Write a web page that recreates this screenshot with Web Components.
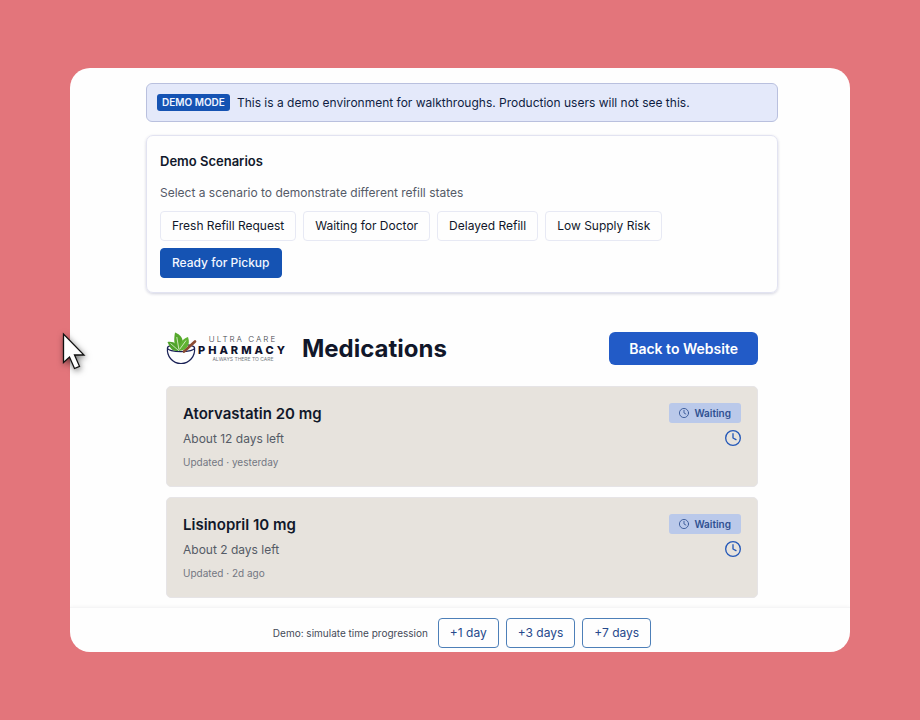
<!DOCTYPE html>
<html lang="en">
<head>
<meta charset="utf-8">
<meta name="viewport" content="width=device-width, initial-scale=1">
<title>Medications</title>
<style>
  body {
    margin: 0;
    background: #e3757b;
    font-family: Inter, "Liberation Sans", sans-serif;
    color: #11182b;
  }
</style>
</head>
<body>
<refill-app></refill-app>

<template id="t-app">
  <style>
    :host { display: flex; box-sizing: border-box; min-height: 100vh; padding: 68px 70px; position: relative; }
    .window { flex: 1; min-width: 0; display: flex; flex-direction: column; background: #fefefe; border-radius: 20px; overflow: hidden; }
    main { flex: 1; padding: 15px 72px 8px 76px; display: flex; flex-direction: column; gap: 13px; }
    .list { padding: 0 20px; margin-top: 26px; display: flex; flex-direction: column; gap: 10px; }
    page-heading { margin-bottom: 11px; }
    mouse-pointer { position: absolute; left: 56px; top: 328px; }
  </style>
  <div class="window">
    <main>
      <demo-banner tag="Demo mode">This is a demo environment for walkthroughs. Production users will not see this.</demo-banner>
      <scenario-panel></scenario-panel>
      <section class="list">
        <page-heading>Medications</page-heading>
        <medication-card>
          <span slot="name">Atorvastatin 20 mg</span>
          <span slot="supply">About 12 days left</span>
          <span slot="updated">Updated · yesterday</span>
          <span slot="status">Waiting</span>
        </medication-card>
        <medication-card>
          <span slot="name">Lisinopril 10 mg</span>
          <span slot="supply">About 2 days left</span>
          <span slot="updated">Updated · 2d ago</span>
          <span slot="status">Waiting</span>
        </medication-card>
      </section>
    </main>
    <time-bar></time-bar>
  </div>
  <mouse-pointer></mouse-pointer>
</template>

<template id="t-banner">
  <style>
    :host { display: flex; align-items: center; gap: 7px; box-sizing: border-box; min-height: 39px; padding: 4px 10px; background: #e4e9fa; border: 1px solid #b9c0de; border-radius: 6px; font-size: 12px; line-height: 18px; color: #0f1d42; font-weight: 400; }
    strong { background: #1553b3; color: #f1f5ff; border-radius: 3px; padding: 0 5px; font-size: 10px; line-height: 17px; font-weight: 600; text-transform: uppercase; white-space: nowrap; }
  </style>
  <strong></strong><span><slot></slot></span>
</template>

<template id="t-scenarios">
  <style>
    :host { display: block; padding: 16px 13px 14px; border: 1px solid #e2e3f1; border-radius: 7px; box-shadow: 0 1px 3px #1d256033; }
    h2 { margin: 0; font-size: 13px; line-height: 18px; font-weight: 600; }
    p { margin: 14px 0 9px; font-size: 12px; line-height: 18px; color: #555b68; }
    .row { display: flex; flex-wrap: wrap; gap: 7px; max-width: 520px; }
  </style>
  <h2>Demo Scenarios</h2>
  <p>Select a scenario to demonstrate different refill states</p>
  <div class="row">
    <action-button>Fresh Refill Request</action-button>
    <action-button>Waiting for Doctor</action-button>
    <action-button>Delayed Refill</action-button>
    <action-button>Low Supply Risk</action-button>
    <action-button kind="primary">Ready for Pickup</action-button>
  </div>
</template>

<template id="t-button">
  <style>
    :host { display: inline-flex; }
    button { font: 400 12px/18px Inter, "Liberation Sans", sans-serif; color: #11172a; background: #fefefe; border: 1px solid #e7e9f4; border-radius: 4px; padding: 5px 11px; margin: 0; cursor: pointer; white-space: nowrap; }
    :host([kind="primary"]) button { background: #1553b3; border-color: #1553b3; color: #f3f7ff; font-weight: 500; }
    :host([kind="outline"]) button { border-color: #4d7fb8; color: #26498c; }
  </style>
  <button type="button"><slot></slot></button>
</template>

<template id="t-heading">
  <style>
    :host { display: flex; align-items: center; gap: 14px; }
    h1 { margin: 0; flex: 1; font-size: 24px; line-height: 33px; font-weight: 700; color: #11172a; }
    a { background: #225bc7; color: #fff; border-radius: 6px; padding: 0 20px; line-height: 33px; font-size: 14px; font-weight: 600; text-decoration: none; white-space: nowrap; }
  </style>
  <pharmacy-logo></pharmacy-logo>
  <h1><slot></slot></h1>
  <a href="#website">Back to Website</a>
</template>

<template id="t-logo">
  <style>
    :host { display: flex; align-items: center; }
    svg { display: block; flex: none; }
    .words { display: flex; flex-direction: column; align-items: center; white-space: nowrap; font-family: Inter, "Liberation Sans", sans-serif; }
    .top { font-size: 8px; line-height: 10px; font-weight: 300; letter-spacing: 2px; color: #44454b; }
    .mid { font-size: 11px; line-height: 12px; font-weight: 800; letter-spacing: 3px; color: #10132d; }
    .low { font-size: 5px; line-height: 7px; color: #777a82; }
  </style>
  <svg width="32" height="33" viewBox="0 0 32 33" aria-hidden="true">
    <path d="M1.500 16c-1 8 5 15.500 13.500 15.500S29.500 24 28.500 16" fill="#fefefe" stroke="#1a2156" stroke-width="1.200"/>
    <ellipse cx="15" cy="16" rx="13.600" ry="3.600" fill="#fefefe" stroke="#1a2156" stroke-width="1.200"/>
    <path d="M18 19.500 29 9.500" stroke="#8b4a30" stroke-width="2.700" stroke-linecap="round"/>
    <path d="M13 18C7 15 8 6 9 .500 16 3 20 10 13 18Z" fill="#55a82c"/>
    <path d="M12.500 19C5 20 3.500 14 1.500 10 8 9 12.500 12.500 12.500 19Z" fill="#4fa22b"/>
    <path d="M13 19C13 11 17 6.500 22 5 25 13 20 18.500 13 19Z" fill="#5fb232"/>
    <path d="M10.800 5 12.800 17M4.500 11.500l8 7M20 8.500 13.500 17.500" fill="none" stroke="#e8f5dc" stroke-width=".8"/>
  </svg>
  <div class="words">
    <span class="top">ULTRA CARE</span>
    <span class="mid">PHARMACY</span>
    <span class="low">ALWAYS THERE TO CARE</span>
  </div>
</template>

<template id="t-card">
  <style>
    :host { display: flex; justify-content: space-between; align-items: flex-start; padding: 16px 16px 15px; background: #e7e3dd; border: 1px solid #e6e4e6; border-radius: 5px; }
    h3 { margin: 0; font-size: 15px; line-height: 22px; font-weight: 600; color: #11182a; }
    p { margin: 5px 0 0; font-size: 12px; line-height: 18px; color: #555b66; }
    small { display: block; margin: 6px 0 1px; font-size: 10px; line-height: 16px; color: #737782; }
    .side { display: flex; flex-direction: column; align-items: flex-end; gap: 7px; }
    .badge { display: flex; align-items: center; gap: 5px; padding: 0 10px; border-radius: 3px; background: #bac9ea; color: #2f5091; font-size: 10px; line-height: 20px; font-weight: 600; }
    .side > clock-icon { color: #2458b8; }
  </style>
  <div>
    <h3><slot name="name"></slot></h3>
    <p><slot name="supply"></slot></p>
    <small><slot name="updated"></slot></small>
  </div>
  <div class="side">
    <span class="badge"><clock-icon size="10"></clock-icon><slot name="status"></slot></span>
    <clock-icon size="16"></clock-icon>
  </div>
</template>

<template id="t-clock">
  <style>
    :host { display: block; }
    svg { display: block; }
  </style>
  <svg viewBox="0 0 24 24" fill="none" stroke="currentColor" stroke-width="2" stroke-linecap="round" stroke-linejoin="round" aria-hidden="true">
    <circle cx="12" cy="12" r="11"/><path d="M12 5.500V12l4.500 2.500"/>
  </svg>
</template>

<template id="t-timebar">
  <style>
    :host { display: flex; justify-content: center; align-items: center; gap: 7px; padding: 10px 0 4px 4px; border-top: 1px solid #f5f5f6; box-shadow: 0 -1px 3px #00000008; }
    span { font-size: 10px; line-height: 16px; color: #454a58; margin-right: 3px; }
  </style>
  <span>Demo: simulate time progression</span>
  <action-button kind="outline">+1 day</action-button>
  <action-button kind="outline">+3 days</action-button>
  <action-button kind="outline">+7 days</action-button>
</template>

<template id="t-pointer">
  <style>
    :host { display: block; pointer-events: none; }
    svg { display: block; filter: drop-shadow(1px 2px 3px #0008); }
  </style>
  <svg width="34" height="48" viewBox="0 0 34 48" aria-hidden="true">
    <path d="M7.500 6v28.500l6-5.500 5 11.500 5-2.200-5-11.300h9.500Z" fill="#fff" stroke="#111" stroke-width="1.300"/>
  </svg>
</template>

<script>
  class TemplateElement extends HTMLElement {
    constructor() {
      super();
      this.attachShadow({ mode: "open" }).append(
        document.getElementById(this.constructor.template).content.cloneNode(true)
      );
    }
  }
  const simple = (name, template) =>
    customElements.define(name, class extends TemplateElement {
      static template = template;
    });

  customElements.define("clock-icon", class extends TemplateElement {
    static template = "t-clock";
    connectedCallback() {
      const svg = this.shadowRoot.querySelector("svg");
      const size = this.getAttribute("size");
      svg.setAttribute("width", size);
      svg.setAttribute("height", size);
    }
  });
  customElements.define("demo-banner", class extends TemplateElement {
    static template = "t-banner";
    connectedCallback() {
      this.shadowRoot.querySelector("strong").textContent = this.getAttribute("tag");
    }
  });
  simple("action-button", "t-button");
  simple("scenario-panel", "t-scenarios");
  simple("pharmacy-logo", "t-logo");
  simple("page-heading", "t-heading");
  simple("medication-card", "t-card");
  simple("time-bar", "t-timebar");
  simple("mouse-pointer", "t-pointer");
  simple("refill-app", "t-app");
</script>
</body>
</html>
